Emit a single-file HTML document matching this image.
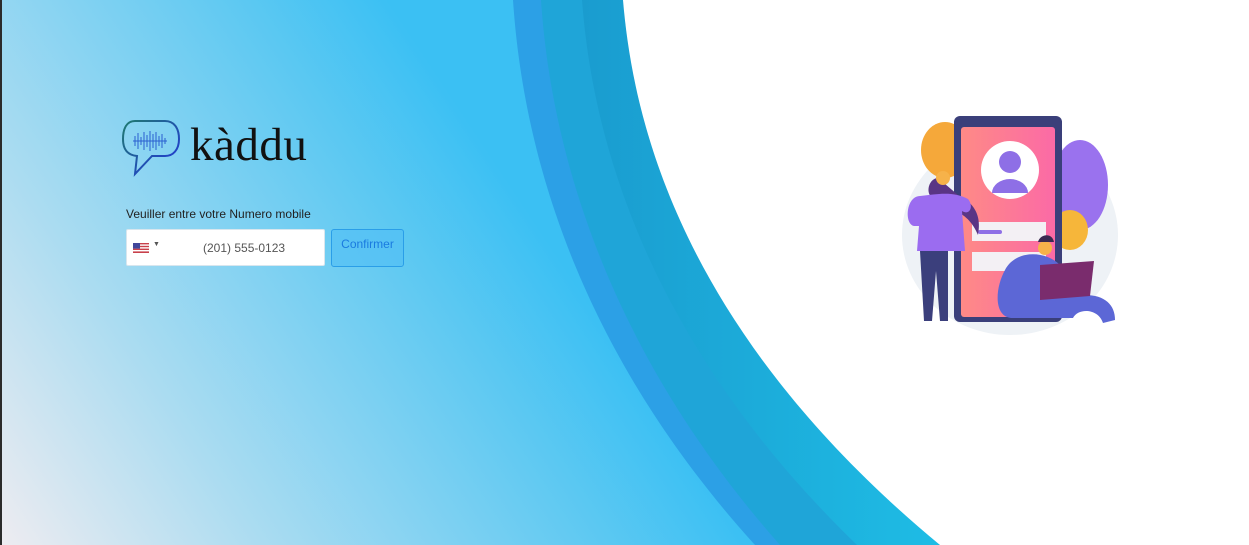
<!DOCTYPE html>
<html><head><meta charset="utf-8"><style>
html,body{margin:0;padding:0;width:1249px;height:545px;overflow:hidden;background:#fff;font-family:"Liberation Sans",sans-serif}
.bg{position:absolute;left:0;top:0;width:1249px;height:545px}
.strip{position:absolute;left:0;top:0;width:2px;height:545px;background:#2b2b2b}
.logo{position:absolute;left:121px;top:119px}
.word{position:absolute;left:190px;top:118px;font-family:"Liberation Serif",serif;font-size:47px;color:#111;letter-spacing:0.5px}
.label{position:absolute;left:126px;top:207px;font-size:12px;color:#222}
.input{position:absolute;left:126px;top:229px;width:199px;height:37px;background:#fff;border:1px solid #d8e6ee;border-radius:2px;box-sizing:border-box}
.flag{position:absolute;left:6px;top:13px;width:16px;height:10px}
.caret{position:absolute;left:26px;top:11px;font-size:7px;color:#555}
.num{position:absolute;left:76px;top:11px;font-size:12px;color:#555}
.btn{position:absolute;left:331px;top:229px;width:73px;height:38px;box-sizing:border-box;border:1px solid #2a9ee8;border-radius:3px;background:rgba(80,190,245,.6);color:#1a7be0;font-size:12px;text-align:center;padding-top:7px}
</style></head><body>
<svg class="bg" width="1249" height="545" viewBox="0 0 1249 545">
<defs>
<linearGradient id="g" x1="0" y1="545" x2="520" y2="200" gradientUnits="userSpaceOnUse">
<stop offset="0" stop-color="#eeecf1"/><stop offset="0.35" stop-color="#abdcf1"/><stop offset="1" stop-color="#3bc0f3"/></linearGradient>
<linearGradient id="g3" x1="0" y1="0" x2="1" y2="0"><stop offset="0" stop-color="#1a9ccf"/><stop offset="1" stop-color="#22d8f8"/></linearGradient>
</defs>
<rect width="1249" height="545" fill="url(#g)"/>
<path d="M513,0 C521,120 560,330 755,545 L1249,545 L1249,0Z" fill="#2ca0e6"/>
<path d="M541,0 C549,120 590,330 780,545 L1249,545 L1249,0Z" fill="#1fa5d8"/>
<path d="M582,0 C591,120 635,330 857,545 L1249,545 L1249,0Z" fill="url(#g3)"/>
<path d="M623,0 C633,120 680,330 940,545 L1249,545 L1249,0Z" fill="#fff"/>
<!-- illustration -->
<ellipse cx="1010" cy="235" rx="108" ry="100" fill="#eef2f6"/>
<ellipse cx="945" cy="150" rx="24" ry="28" fill="#f5a83a"/>
<ellipse cx="1080" cy="185" rx="28" ry="45" fill="#9a72ee"/>
<ellipse cx="1070" cy="230" rx="18" ry="20" fill="#f6b63a"/>
<rect x="954" y="116" width="108" height="206" rx="6" fill="#3a3f7a"/>
<defs><linearGradient id="ph" x1="0" x2="1"><stop offset="0" stop-color="#fe8a86"/><stop offset="1" stop-color="#fb6aa6"/></linearGradient></defs>
<rect x="961" y="127" width="94" height="190" rx="3" fill="url(#ph)"/>
<circle cx="1010" cy="170" r="29" fill="#fff"/>
<circle cx="1010" cy="162" r="11" fill="#8e6fe6"/>
<path d="M992,193 a18,14 0 0 1 36,0 Z" fill="#8e6fe6"/>
<rect x="972" y="222" width="74" height="19" fill="#f3f0f4"/>
<rect x="978" y="230" width="24" height="4" rx="2" fill="#8e6fe6"/>
<rect x="972" y="252" width="74" height="19" fill="#f3f0f4"/>
<path d="M938,178 c-10,0 -15,20 0,22 c10,10 30,10 40,35 c5,-25 -10,-35 -20,-40z" fill="#5a3585"/>
<circle cx="943" cy="178" r="7" fill="#f6b24a"/>
<path d="M920,196 c-14,0 -16,28 -6,30 l5,0 l-2,25 l48,0 l-3,-40 c8,5 12,-5 6,-12 c-15,-8 -30,-5 -48,-3z" fill="#9b6cf0"/>
<path d="M920,251 l4,70 l8,0 l4,-50 l4,50 l8,0 l0,-70z" fill="#3b3f7c"/>
<path d="M1005,270 c10,-20 40,-20 55,-5 l30,0 l-5,30 c20,0 30,10 30,25 l-12,3 c-5,-15 -25,-15 -30,-5 l-60,0 c-20,0 -18,-30 -8,-48z" fill="#5c67d6"/>
<path d="M1040,265 l54,-4 l-4,35 l-50,4z" fill="#7a2c6d"/>
<circle cx="1045" cy="248" r="7" fill="#f6b24a"/>
<path d="M1038,242 c2,-8 14,-10 16,0z" fill="#3a2a50"/>
</svg>
<div class="strip"></div>
<svg class="logo" width="60" height="58" viewBox="0 0 60 58">
<defs><linearGradient id="lg" x1="0" y1="0" x2="1" y2="1"><stop offset="0" stop-color="#1f7a6f"/><stop offset="1" stop-color="#2233e0"/></linearGradient></defs>
<path d="M14,2 L44,2 C53,2 58,9 58,20 C58,31 52,37 44,37 L31,37 L14,55 L16,37 C6,36 2,30 2,20 C2,9 6,2 14,2Z" fill="none" stroke="url(#lg)" stroke-width="2"/>
<g stroke="#2a5fd0" stroke-width="1">
<path d="M12,22h34M14,17v10M17,14v16M20,18v8M23,13v18M26,16v12M29,12v20M32,15v14M35,13v18M38,17v10M41,15v14M44,19v6"/></g>
</svg>
<div class="word">kàddu</div>
<div class="label">Veuiller entre votre Numero mobile</div>
<div class="input">
<svg class="flag" viewBox="0 0 16 10"><rect width="16" height="10" fill="#fff"/><g fill="#c8414b"><rect y="0" width="16" height="1.4"/><rect y="2.8" width="16" height="1.4"/><rect y="5.6" width="16" height="1.4"/><rect y="8.4" width="16" height="1.6"/></g><rect width="7" height="5.6" fill="#41479b"/></svg>
<div class="caret">▼</div>
<div class="num">(201) 555-0123</div>
</div>
<div class="btn">Confirmer</div>
</body></html>
